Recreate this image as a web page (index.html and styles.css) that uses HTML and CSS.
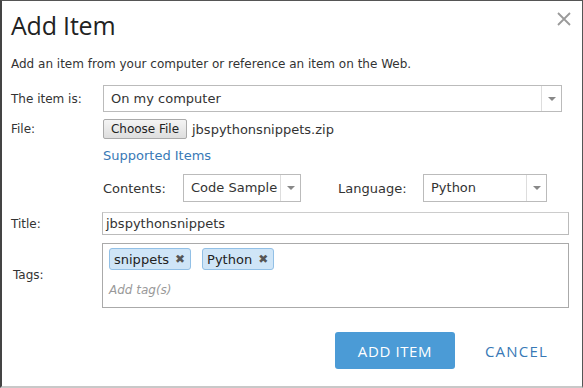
FILE: index.html
```html
<!DOCTYPE html>
<html lang="en">
<head>
    <meta charset="UTF-8">
    <title>Add Item</title>
    <link rel="stylesheet" href="styles.css">
</head>
<body>
    <div class="dialog">
        <div class="dialog-head">
            <h1>Add Item</h1>
            <svg class="close" width="14" height="14" viewBox="0 0 14 14">
                <path d="M1 1L13 13M13 1L1 13" stroke="#9a9a9a" stroke-width="1.8" fill="none"/>
            </svg>
        </div>
        <p class="intro">Add an item from your computer or reference an item on the Web.</p>

        <div class="row row-source">
            <label class="lbl">The item is:</label>
            <div class="select select-wide">
                <span class="select-value">On my computer</span>
                <span class="select-arrow"><i></i></span>
            </div>
        </div>

        <div class="row row-file">
            <label class="lbl">File:</label>
            <button class="choose">Choose File</button>
            <span class="filename">jbspythonsnippets.zip</span>
        </div>

        <div class="row row-link">
            <span class="lbl"></span>
            <a class="link" href="#">Supported Items</a>
        </div>

        <div class="row row-meta">
            <span class="lbl"></span>
            <span class="sub-lbl">Contents:</span>
            <div class="select select-contents">
                <span class="select-value">Code Sample</span>
                <span class="select-arrow"><i></i></span>
            </div>
            <span class="sub-lbl lang-lbl">Language:</span>
            <div class="select select-lang">
                <span class="select-value">Python</span>
                <span class="select-arrow"><i></i></span>
            </div>
        </div>

        <div class="row row-title">
            <label class="lbl">Title:</label>
            <div class="text-input">jbspythonsnippets</div>
        </div>

        <div class="row row-tags">
            <label class="lbl lbl-tags">Tags:</label>
            <div class="tags-box">
                <div class="chips">
                    <span class="chip">snippets <b>&#x2716;</b></span>
                    <span class="chip">Python <b>&#x2716;</b></span>
                </div>
                <span class="placeholder">Add tag(s)</span>
            </div>
        </div>

        <div class="actions">
            <button class="btn-primary">ADD ITEM</button>
            <a class="btn-link" href="#">CANCEL</a>
        </div>
    </div>
</body>
</html>
```

FILE: styles.css
```css
* {
    box-sizing: border-box;
}
body {
    margin: 0;
    font-family: "DejaVu Sans", Verdana, sans-serif;
    font-size: 12px;
    color: #333;
    background: #fff;
}
.dialog {
    width: 583px;
    height: 388px;
    border: 1px solid #555;
    border-left: 2px solid #444;
    border-bottom: 2px solid #c8c8c8;
    background: #fff;
}
.dialog-head {
    display: flex;
    justify-content: space-between;
    padding: 7px 11px 0 9px;
    height: 46px;
}
h1 {
    margin: 0;
    font-family: "Open Sans", sans-serif;
    font-weight: normal;
    font-size: 25px;
    color: #222;
    letter-spacing: -0.2px;
}
.close {
    margin-top: 4px;
}
.intro {
    margin: 0 0 0 9px;
    height: 37px;
    line-height: 16px;
    padding-top: 9px;
}

.row {
    display: flex;
    align-items: center;
    padding-left: 9px;
}
.lbl {
    width: 92px;
    flex: none;
}
.row-source {
    height: 27px;
    margin-top: 1px;
}
.select {
    display: flex;
    align-items: stretch;
    border: 1px solid #bbb;
    background: #fff;
    height: 27px;
}
.select-value {
    flex: 1;
    padding-left: 7px;
    line-height: 25px;
    font-size: 13px;
}
.select-arrow {
    width: 20px;
    border-left: 1px solid #ddd;
    display: flex;
    align-items: center;
    justify-content: center;
}
.select-arrow i {
    width: 0;
    height: 0;
    border-left: 4px solid transparent;
    border-right: 4px solid transparent;
    border-top: 4px solid #888;
}
.select-wide {
    width: 459px;
}

.row-file {
    margin-top: 7px;
    height: 20px;
}
.choose {
    font-family: "DejaVu Sans", sans-serif;
    font-size: 12px;
    color: #222;
    height: 20px;
    width: 84px;
    padding: 0;
    border: 1px solid #aaa;
    border-radius: 2px;
    background: linear-gradient(#f4f4f4, #dedede);
}
.filename {
    margin-left: 5px;
    font-size: 13px;
}

.row-link {
    margin-top: 8px;
    height: 17px;
}
.link {
    color: #3879b6;
    text-decoration: none;
    font-size: 13px;
}

.row-meta {
    margin-top: 10px;
    height: 28px;
}
.sub-lbl {
    width: 80px;
    font-size: 13px;
}
.lang-lbl {
    margin-left: 37px;
    width: 85px;
}
.select-contents {
    width: 118px;
    height: 28px;
}
.select-lang {
    width: 124px;
    height: 28px;
}

.row-title {
    margin-top: 10px;
    height: 23px;
}
.text-input {
    width: 467px;
    height: 23px;
    border: 1px solid #bbb;
    border-top-color: #ccc;
    padding-left: 3px;
    line-height: 21px;
    font-size: 13px;
    margin-left: -1px;
}

.row-tags {
    margin-top: 8px;
    align-items: flex-start;
}
.lbl-tags {
    padding-top: 25px;
    padding-left: 2px;
}
.tags-box {
    width: 467px;
    height: 65px;
    border: 1px solid #aaa;
    margin-left: -1px;
    padding: 4px 0 0 6px;
}
.chips {
    display: flex;
    gap: 11px;
}
.chip {
    display: inline-flex;
    align-items: center;
    height: 22px;
    padding: 0 5px 0 4px;
    background: #cfe5f7;
    border: 1px solid #92c0e6;
    border-radius: 3px;
    font-size: 13px;
    color: #222;
}
.chip b {
    font-weight: bold;
    font-size: 12px;
    color: #555;
    margin-left: 6px;
}
.placeholder {
    display: block;
    margin-top: 13px;
    font-style: italic;
    color: #999;
    font-size: 12px;
}

.actions {
    display: flex;
    justify-content: flex-end;
    align-items: center;
    margin-top: 24px;
    padding-right: 34px;
    gap: 30px;
}
.btn-primary {
    width: 120px;
    height: 37px;
    border: none;
    border-radius: 3px;
    background: #4b9bd6;
    color: #fff;
    font-family: "Open Sans", sans-serif;
    font-size: 15px;
    letter-spacing: 0.6px;
}
.btn-link {
    color: #3879b6;
    text-decoration: none;
    font-family: "Open Sans", sans-serif;
    font-size: 15px;
    letter-spacing: 1.2px;
}
```
